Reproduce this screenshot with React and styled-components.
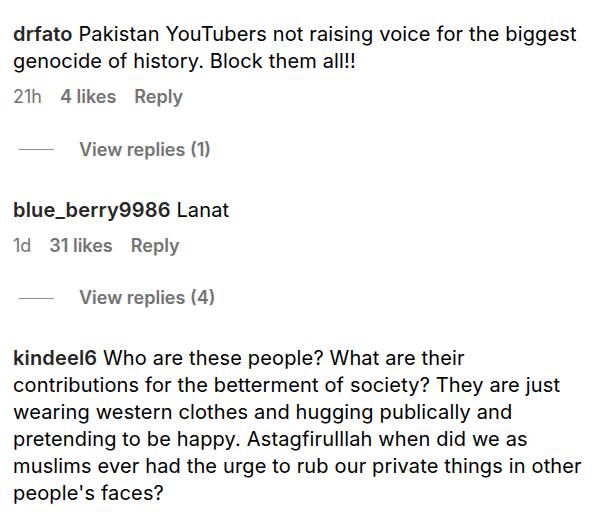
import styled, { createGlobalStyle } from "styled-components";

const GlobalStyle = createGlobalStyle`
  body {
    margin: 0;
    background: #fff;
    font-family: Inter, "Noto Sans", "Liberation Sans", sans-serif;
    -webkit-font-smoothing: antialiased;
  }
`;

const comments = [
  {
    user: "drfato",
    text: "Pakistan YouTubers not raising voice for the biggest genocide of history. Block them all!!",
    time: "21h",
    likes: "4 likes",
    replies: 1,
  },
  {
    user: "blue_berry9986",
    text: "Lanat",
    time: "1d",
    likes: "31 likes",
    replies: 4,
  },
  {
    user: "kindeel6",
    text: "Who are these people? What are their contributions for the betterment of society? They are just wearing western clothes and hugging publically and pretending to be happy. Astagfirulllah when did we as muslims ever had the urge to rub our private things in other people's faces?",
  },
];

const List = styled.div`
  display: flex;
  flex-direction: column;
  gap: 36px;
  padding: 21px 12px 0 13px;
`;

const Comment = styled.div`
  display: flex;
  flex-direction: column;
`;

const Body = styled.p`
  margin: 0;
  font-size: 20px;
  line-height: 27px;
  letter-spacing: 0.15px;
  color: #000;
`;

const User = styled.span`
  font-weight: 600;
  color: #262626;
`;

const Meta = styled.div`
  display: flex;
  gap: 18px;
  margin-top: 11px;
  font-size: 18px;
  line-height: 22px;
  color: #737373;
`;

const MetaItem = styled.span`
  font-weight: ${(p) => (p.bold ? 600 : 400)};
`;

const Replies = styled.div`
  display: flex;
  align-items: center;
  gap: 25px;
  margin-top: 30.5px;
  padding-left: 6px;
  font-size: 18px;
  line-height: 22px;
  font-weight: 600;
  color: #737373;
`;

const Dash = styled.span`
  width: 35px;
  height: 1px;
  background: #8e8e8e;
`;

export default function App() {
  return (
    <>
      <GlobalStyle />
      <List>
        {comments.map((c) => (
          <Comment key={c.user}>
            <Body>
              <User>{c.user}</User> {c.text}
            </Body>
            {c.time && (
              <Meta>
                <MetaItem>{c.time}</MetaItem>
                <MetaItem bold>{c.likes}</MetaItem>
                <MetaItem bold>Reply</MetaItem>
              </Meta>
            )}
            {c.replies && (
              <Replies>
                <Dash />
                View replies ({c.replies})
              </Replies>
            )}
          </Comment>
        ))}
      </List>
    </>
  );
}
